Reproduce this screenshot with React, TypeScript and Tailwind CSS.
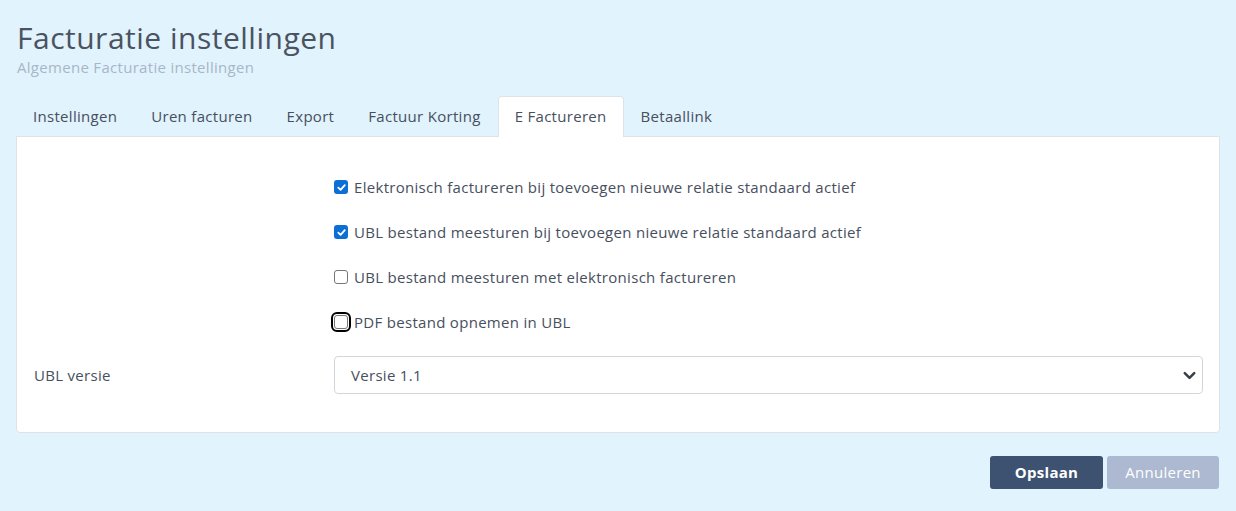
import { ChevronDown } from "lucide-react"

const tabs = [
  "Instellingen",
  "Uren facturen",
  "Export",
  "Factuur Korting",
  "E Factureren",
  "Betaallink"
]

const options = [
  { label: "Elektronisch factureren bij toevoegen nieuwe relatie standaard actief", checked: true },
  { label: "UBL bestand meesturen bij toevoegen nieuwe relatie standaard actief", checked: true },
  { label: "UBL bestand meesturen met elektronisch factureren", checked: false },
  { label: "PDF bestand opnemen in UBL", checked: false, focus: true }
]

const Check = ({ checked, focus }: { checked: boolean; focus?: boolean }) => (
  <span
    className={
      "flex h-[14px] w-[14px] shrink-0 items-center justify-center rounded-[3px] " +
      (checked ? "bg-[#0b6fd6]" : "border border-[#777] bg-white") +
      (focus ? " outline-2 outline-offset-1 outline-black" : "")
    }
  >
    {checked ? (
      <svg viewBox="0 0 12 12" className="h-[11px] w-[11px]">
        <path d="M2.5 6.2 5 8.6 9.6 3.4" fill="none" stroke="white" strokeWidth="2" strokeLinecap="round" strokeLinejoin="round" />
      </svg>
    ) : null}
  </span>
)

const App = () => {
  return (
    <main className="min-h-[511px] bg-[#e1f3fd] px-4 pt-[18px] font-['Open_Sans',sans-serif] tracking-[0.3px] text-[#474f5e]">
      <header className="pl-px">
        <h1 className="text-[30px] leading-[40px] tracking-[0.5px] text-[#4b5260]">Facturatie instellingen</h1>
        <p className="text-[15px] leading-[18px] text-[#a9b6c8]">Algemene Facturatie instellingen</p>
      </header>

      <nav className="mt-[20px] flex text-[15px]">
        {tabs.map((tab) => (
          <div
            key={tab}
            className={
              "px-4 py-[9px] leading-[20px] " +
              (tab === "E Factureren"
                ? "relative -mb-px rounded-t-[4px] border border-b-0 border-[#dfe3e8] bg-white"
                : "border border-transparent")
            }
          >
            {tab}
          </div>
        ))}
      </nav>

      <section className="rounded-b-[4px] border border-[#dfe3e8] bg-white pb-[38px] pl-[17px] pr-[16px] pt-[40px]">
        <div className="flex flex-col gap-[25px] pl-[300px] text-[15px]">
          {options.map((option) => (
            <label key={option.label} className="flex h-[20px] items-center gap-[6px]">
              <Check checked={option.checked} focus={option.focus} />
              {option.label}
            </label>
          ))}
        </div>

        <div className="mt-[24px] grid grid-cols-[300px_1fr] items-center text-[15px]">
          <span>UBL versie</span>
          <div className="flex h-[38px] items-center justify-between rounded-[4px] border border-[#d2d6dc] pl-4 pr-[3px]">
            <span>Versie 1.1</span>
            <ChevronDown className="h-[19px] w-[19px] text-[#3a3f47]" strokeWidth={3.2} />
          </div>
        </div>
      </section>

      <div className="mr-px mt-[23px] flex justify-end gap-1 text-[15px]">
        <button className="h-[33px] w-[113px] rounded-[3px] bg-[#3d5170] font-bold text-white">Opslaan</button>
        <button className="h-[33px] w-[112px] rounded-[3px] bg-[#adb9d0] text-white">Annuleren</button>
      </div>
    </main>
  )
}

export default App
